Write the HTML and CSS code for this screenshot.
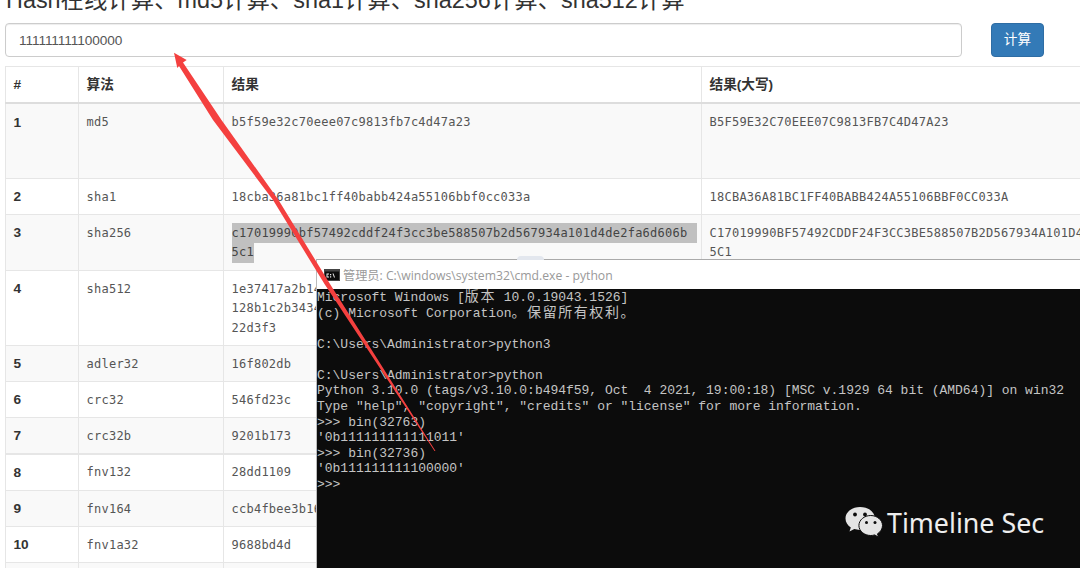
FILE: index.html
```html
<!DOCTYPE html>
<html lang="zh">
<head>
<meta charset="utf-8">
<title>Hash在线计算</title>
<link rel="stylesheet" href="styles.css">
</head>
<body>
<main class="page">
  <h1 class="title">Hash在线计算、md5计算、sha1计算、sha256计算、sha512计算</h1>
  <form class="calc">
    <input class="calc-input" type="text" value="111111111100000">
    <button class="calc-btn" type="button">计算</button>
  </form>
  <table class="hash">
    <colgroup><col class="c1"><col class="c2"><col class="c3"><col class="c4"></colgroup>
    <thead>
      <tr><th>#</th><th>算法</th><th>结果</th><th>结果(大写)</th></tr>
    </thead>
    <tbody>
      <tr class="tall"><th>1</th><td>md5</td><td>b5f59e32c70eee07c9813fb7c4d47a23</td><td>B5F59E32C70EEE07C9813FB7C4D47A23</td></tr>
      <tr><th>2</th><td>sha1</td><td>18cba36a81bc1ff40babb424a55106bbf0cc033a</td><td>18CBA36A81BC1FF40BABB424A55106BBF0CC033A</td></tr>
      <tr class="two"><th>3</th><td>sha256</td><td><span class="sel sel-full">c17019990bf57492cddf24f3cc3be588507b2d567934a101d4de2fa6d606b</span><span class="sel">5c1</span></td><td>C17019990BF57492CDDF24F3CC3BE588507B2D567934A101D4DE2FA6D606B<br>5C1</td></tr>
      <tr><th>4</th><td>sha512</td><td>1e37417a2b14<br>128b1c2b3434<br>22d3f3</td><td></td></tr>
      <tr><th>5</th><td>adler32</td><td>16f802db</td><td></td></tr>
      <tr><th>6</th><td>crc32</td><td>546fd23c</td><td></td></tr>
      <tr><th>7</th><td>crc32b</td><td>9201b173</td><td></td></tr>
    </tbody>
    <tbody class="group">
      <tr><th>8</th><td>fnv132</td><td>28dd1109</td><td></td></tr>
      <tr><th>9</th><td>fnv164</td><td>ccb4fbee3b16</td><td></td></tr>
      <tr><th>10</th><td>fnv1a32</td><td>9688bd4d</td><td></td></tr>
      <tr><th>&nbsp;</th><td></td><td></td><td></td></tr>
    </tbody>
  </table>
</main>

<section class="cmd">
  <span class="cmd-tab"></span>
  <header class="cmd-bar">
    <svg class="cmd-icon" viewBox="0 0 16 12" width="16" height="12" aria-hidden="true">
      <rect width="16" height="12" fill="#444"/>
      <rect x="1" y="2.500" width="14" height="8.500" fill="#0c0c0c"/>
      <path d="M2.500 4.500h2.500v1H3.500v2H5v1H2.500zM6 5h1.200v1.200H6zM6 7.300h1.200v1.200H6zM8.500 4.500h1l1.500 4h-1z" fill="#eee"/>
    </svg>
    <span class="cmd-title">管理员: C:\windows\system32\cmd.exe - python</span>
  </header>
  <pre class="cmd-body">Microsoft Windows [<span class="cjk">版本</span> 10.0.19043.1526]
(c) Microsoft Corporation<span class="cjk">。保留所有权利。</span>

C:\Users\Administrator&gt;python3

C:\Users\Administrator&gt;python
Python 3.10.0 (tags/v3.10.0:b494f59, Oct  4 2021, 19:00:18) [MSC v.1929 64 bit (AMD64)] on win32
Type "help", "copyright", "credits" or "license" for more information.
&gt;&gt;&gt; bin(32763)
'0b111111111111011'
&gt;&gt;&gt; bin(32736)
'0b111111111100000'
&gt;&gt;&gt;</pre>
  <div class="mark">
    <svg class="mark-icon" viewBox="0 0 38 33" width="38" height="33" aria-hidden="true">
      <path d="M15 0C7 0 .5 5 .5 11.500c0 3.700 2.100 6.800 5.300 9l-1.300 4 4.800-2.400c1.700.5 3.500.8 5.300.8.500 0 .9 0 1.400-.1-.3-1-.5-2-.5-3 0-6 5.900-10.800 13-10.800h1.100C28.200 3.600 22.200 0 15 0z" fill="#e4e4e4"/>
      <path d="M37.500 18.500c0-5.500-5.400-10-11.800-10s-11.800 4.500-11.800 10 5.400 10 11.800 10c1.400 0 2.700-.2 4-.6l3.800 2.300-1-3.400c3-1.900 5-4.900 5-8.300z" fill="#e4e4e4" stroke="#0c0c0c" stroke-width="1"/>
      <circle cx="10" cy="7.500" r="1.900" fill="#0c0c0c"/>
      <circle cx="20" cy="7.500" r="1.900" fill="#0c0c0c"/>
      <circle cx="21.500" cy="15.500" r="1.500" fill="#0c0c0c"/>
      <circle cx="30" cy="15.500" r="1.500" fill="#0c0c0c"/>
    </svg>
    <span class="mark-text">Timeline Sec</span>
  </div>
</section>

<svg class="arrow" viewBox="0 0 1080 568" width="1080" height="568" aria-hidden="true">
  <polygon points="174,52.700 186.700,60 183,62.500 221.500,120 278.500,200 330,284 435.500,451 434.500,451 324.500,284 273,200 213,120 179,66 177.300,68" fill="#f4403f"/>
</svg>
</body>
</html>
```
FILE: styles.css
```css
* { box-sizing: border-box; }
html, body { margin: 0; width: 1080px; height: 568px; overflow: hidden; background: #fff; }
body { position: relative; font-family: "Liberation Sans", "Noto Sans CJK SC", sans-serif; color: #333; }

.page { padding-left: 5px; width: 1180px; }

.title {
  margin: -13px 0 0 1px;
  font-size: 23.400px;
  line-height: 26px;
  font-weight: 400;
  color: #333;
  white-space: nowrap;
  height: 36px;
}

.calc { display: flex; align-items: stretch; height: 34px; margin-bottom: 9px; }
.calc-input {
  width: 957px;
  height: 34px;
  padding: 0 13px;
  border: 1px solid #ccc;
  border-radius: 4px;
  font: 13.650px/20px "Liberation Sans", sans-serif;
  letter-spacing: -.1px;
  color: #555;
  background: #fff;
  box-shadow: inset 0 1px 1px rgba(0,0,0,.075);
}
.calc-btn {
  width: 53px;
  margin-left: 29px;
  border: 1px solid #2e6da4;
  border-radius: 4px;
  background: #337ab7;
  color: #fff;
  font: 13.650px/20px "Liberation Sans", "Noto Sans CJK SC", sans-serif;
  padding: 0;
}

.hash {
  table-layout: fixed;
  border-collapse: collapse;
  width: 1174px;
  font-size: 13.650px;
  line-height: 19.500px;
}
.c1 { width: 73px; }
.c2 { width: 145px; }
.c3 { width: 478px; }
.c4 { width: 478px; }

.hash th, .hash td {
  padding: 9px 8px 6.500px 7.500px;
  border: 1px solid #e6e6e6;
  text-align: left;
  vertical-align: top;
}
.hash thead th { padding: 8px 8px 7.500px 7.500px; border-bottom: 2px solid #ddd; font-weight: 700; color: #333; }
.hash tbody th { padding-top: 8.500px; padding-bottom: 7px; font-weight: 700; }
.hash td {
  font-family: "DejaVu Sans Mono", "Liberation Mono", monospace;
  font-size: 12px;
  letter-spacing: .25px;
  color: #555;
  word-break: break-all;
}
.hash tbody tr:nth-child(odd) { background: #f9f9f9; }
.hash tbody.group tr:nth-child(odd) { background: #fff; }
.hash tbody.group tr:nth-child(even) { background: #f9f9f9; }
.hash tbody.group tr:first-child td { padding-top: 8.500px; border-top: 2px solid #e6e6e6; }
.hash tbody.group tr:first-child th { padding-top: 8.500px; border-top: 2px solid #e6e6e6; }
.hash .tall th, .hash .tall td { height: 75px; }
.hash .two td { padding-bottom: 7px; }

.sel { display: block; width: fit-content; background: #c0c0c0; color: #444; }
.sel-full { width: 465px; margin-top: -1px; padding-top: 1px; }

.cmd {
  position: absolute;
  left: 316px;
  top: 259px;
  width: 764px;
  height: 309px;
  background: #0c0c0c;
  border-top: 1px solid #aaa;
  border-left: 1px solid #bbb;
}
.cmd-tab {
  position: absolute;
  left: 200px;
  top: -4px;
  width: 27px;
  height: 4px;
  border-radius: 6px 6px 0 0;
  background: #e3e7ee;
}
.cmd-bar {
  display: flex;
  align-items: center;
  gap: 3px;
  height: 29px;
  padding-left: 7px;
  background: #fff;
}
.cmd-title {
  font-family: "Open Sans", "Noto Sans CJK SC", sans-serif;
  font-size: 12.200px;
  color: #999;
  white-space: nowrap;
}
.cmd-body {
  margin: 1px 0 0;
  font-family: "Liberation Mono", monospace;
  font-size: 13px;
  line-height: 15.580px;
  letter-spacing: -.02px;
  color: #c4c4c4;
}
.cjk { font-family: "Noto Sans CJK SC", sans-serif; font-size: 14px; letter-spacing: 1.560px; line-height: 0; }

.mark { position: absolute; left: 528px; top: 244px; display: flex; align-items: center; gap: 4px; }
.mark-text {
  font-family: "Noto Sans", sans-serif;
  font-size: 26.800px;
  line-height: 38px;
  color: #eee;
  white-space: nowrap;
}

.arrow { position: absolute; left: 0; top: 0; pointer-events: none; }
```
